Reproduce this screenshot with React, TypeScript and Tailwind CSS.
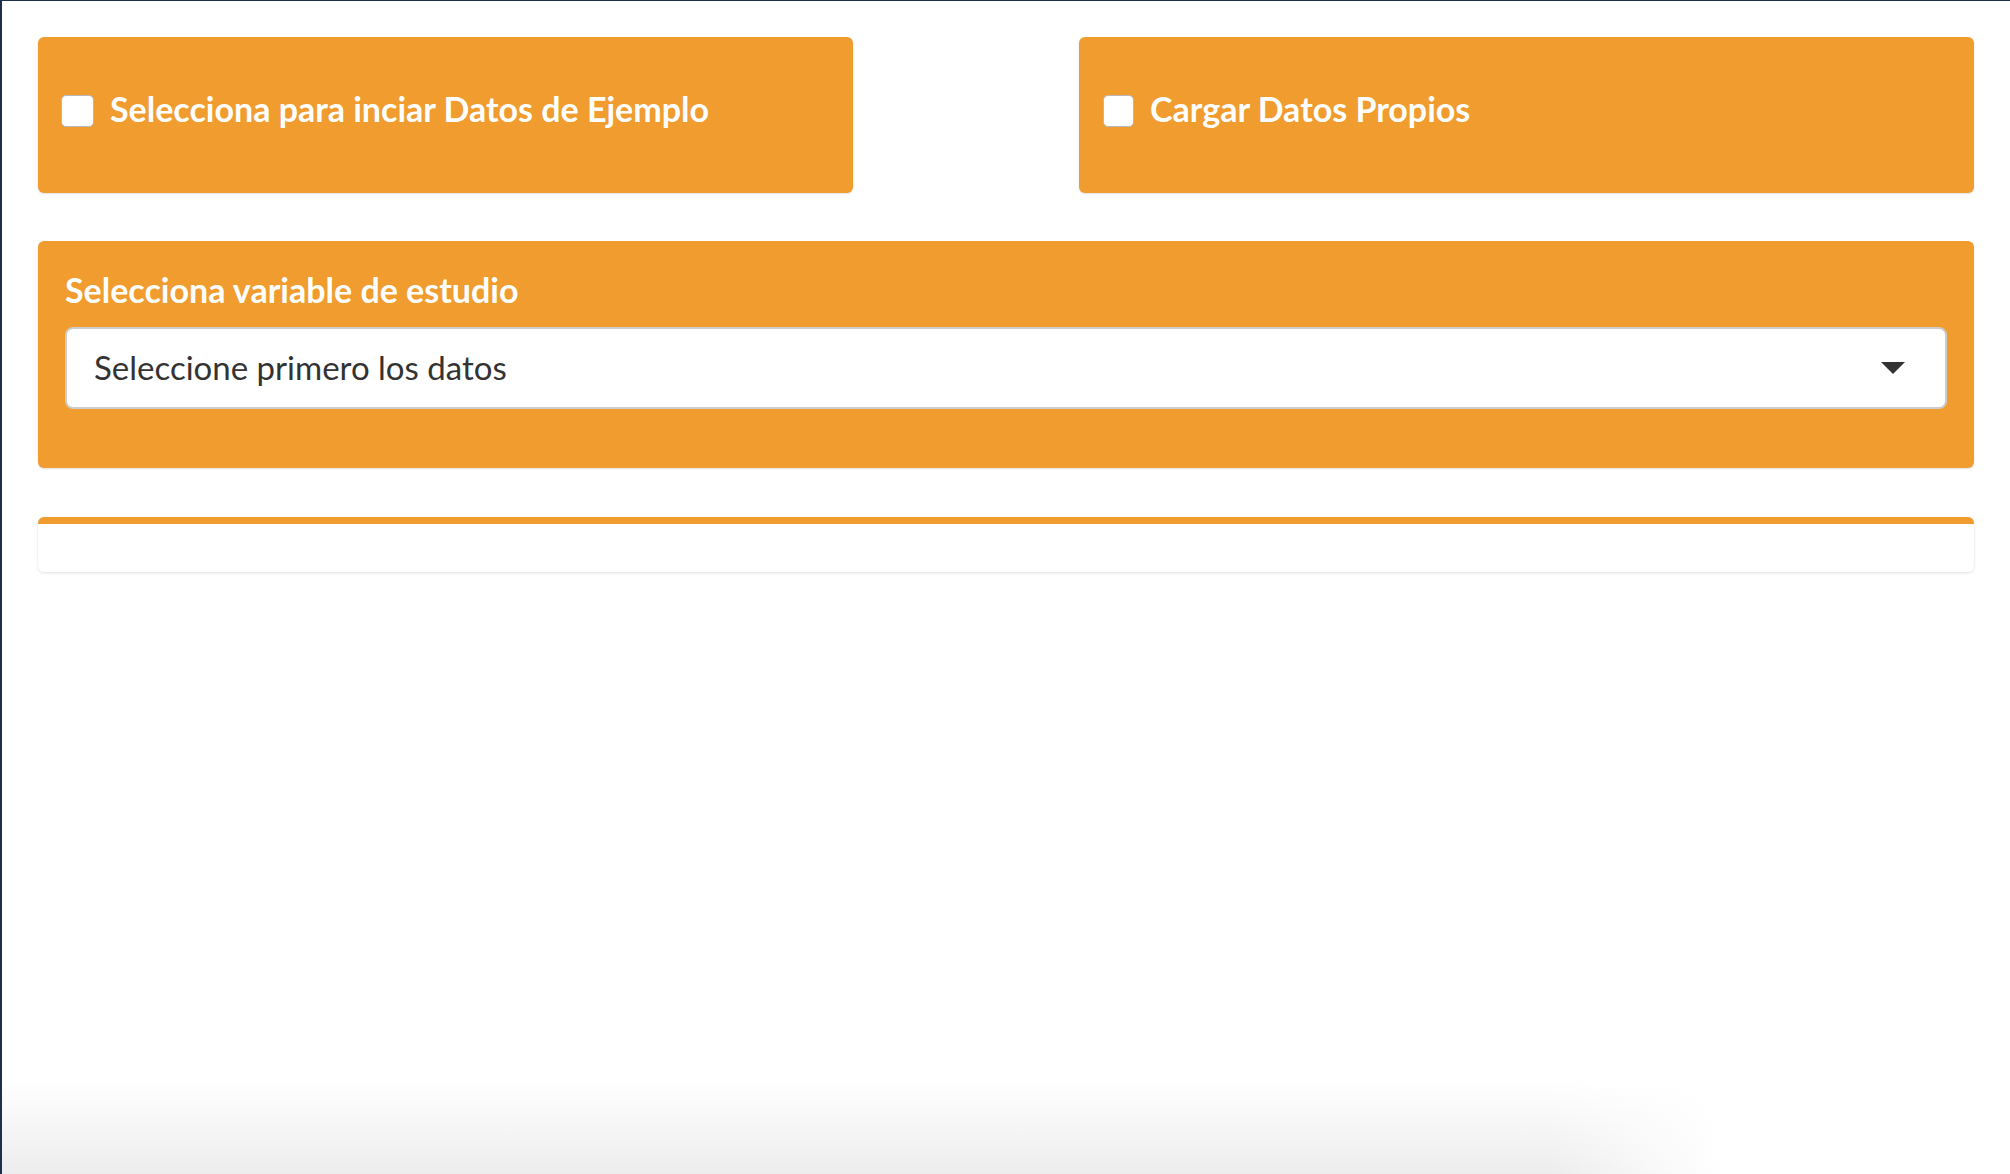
export default function App() {
  return (
    <div className="relative min-h-screen overflow-hidden bg-white border-l-2 border-t border-[#1c2f4f] font-['Lato',sans-serif]">
      <div className="pl-[36px] pr-[36px] pt-[36px]">
        <div className="flex justify-between">
          <div className="w-[815px] h-[156px] rounded-md bg-[#f09c2f] shadow-[0_1px_2px_rgba(0,0,0,0.12)] pl-[23px] pt-[58px]">
            <label className="flex items-center gap-[16px] text-white font-bold text-[34px] leading-[32px]">
              <span className="w-[33px] h-[32px] rounded-[5px] bg-white border border-[#b9b9b9] shrink-0" />
              <span className="-mt-[4px]">Selecciona para inciar Datos de Ejemplo</span>
            </label>
          </div>
          <div className="w-[895px] h-[156px] rounded-md bg-[#f09c2f] shadow-[0_1px_2px_rgba(0,0,0,0.12)] pl-[24px] pt-[58px]">
            <label className="flex items-center gap-[16px] text-white font-bold text-[34px] leading-[32px]">
              <span className="w-[31px] h-[32px] rounded-[5px] bg-white border border-[#b9b9b9] shrink-0" />
              <span className="-mt-[4px]">Cargar Datos Propios</span>
            </label>
          </div>
        </div>

        <div className="mt-[48px] rounded-md bg-[#f09c2f] shadow-[0_1px_2px_rgba(0,0,0,0.12)] px-[27px] pt-[29px] pb-[59px]">
          <div className="text-white font-bold text-[34px] leading-[40px] mb-[17px]">
            Selecciona variable de estudio
          </div>
          <div className="flex items-center justify-between h-[82px] rounded-lg bg-white border-2 border-[#cccccc] pl-[27px] pr-[40px]">
            <span className="text-[#333333] text-[33px]">Seleccione primero los datos</span>
            <svg width="24" height="12" viewBox="0 0 24 12" className="fill-[#333333]">
              <path d="M0 0 H24 L12 12 Z" />
            </svg>
          </div>
        </div>

        <div className="mt-[49px] h-[55px] rounded-md bg-white border-t-[7px] border-[#f09c2f] shadow-[0_1px_3px_rgba(0,0,0,0.12)]" />
      </div>

      <div className="absolute left-0 bottom-0 w-[1720px] h-[95px] bg-gradient-to-b from-transparent to-[#ededed] [mask-image:linear-gradient(to_right,black_90%,transparent)]" />
    </div>
  );
}
